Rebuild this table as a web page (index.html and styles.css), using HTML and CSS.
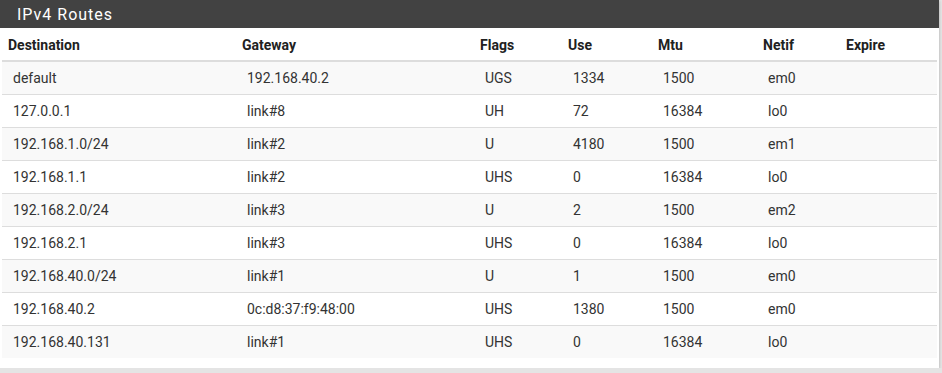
FILE: index.html
```html
<!DOCTYPE html>
<html>
<head>
<meta charset="utf-8">
<link rel="stylesheet" href="styles.css">
</head>
<body>
<div class="panel">
  <div class="panel-heading"><h2 class="panel-title">IPv4 Routes</h2></div>
  <div class="panel-body">
    <table class="routes">
      <colgroup>
        <col class="c1"><col class="c2"><col class="c3"><col class="c4"><col class="c5"><col class="c6"><col class="c7">
      </colgroup>
      <thead>
        <tr><th>Destination</th><th>Gateway</th><th>Flags</th><th>Use</th><th>Mtu</th><th>Netif</th><th>Expire</th></tr>
      </thead>
      <tbody>
        <tr><td>default</td><td>192.168.40.2</td><td>UGS</td><td>1334</td><td>1500</td><td>em0</td><td></td></tr>
        <tr><td>127.0.0.1</td><td>link#8</td><td>UH</td><td>72</td><td>16384</td><td>lo0</td><td></td></tr>
        <tr><td>192.168.1.0/24</td><td>link#2</td><td>U</td><td>4180</td><td>1500</td><td>em1</td><td></td></tr>
        <tr><td>192.168.1.1</td><td>link#2</td><td>UHS</td><td>0</td><td>16384</td><td>lo0</td><td></td></tr>
        <tr><td>192.168.2.0/24</td><td>link#3</td><td>U</td><td>2</td><td>1500</td><td>em2</td><td></td></tr>
        <tr><td>192.168.2.1</td><td>link#3</td><td>UHS</td><td>0</td><td>16384</td><td>lo0</td><td></td></tr>
        <tr><td>192.168.40.0/24</td><td>link#1</td><td>U</td><td>1</td><td>1500</td><td>em0</td><td></td></tr>
        <tr><td>192.168.40.2</td><td>0c:d8:37:f9:48:00</td><td>UHS</td><td>1380</td><td>1500</td><td>em0</td><td></td></tr>
        <tr><td>192.168.40.131</td><td>link#1</td><td>UHS</td><td>0</td><td>16384</td><td>lo0</td><td></td></tr>
      </tbody>
    </table>
  </div>
</div>
</body>
</html>
```
FILE: styles.css
```css
html, body {
  margin: 0;
  padding: 0;
  background: #e4e4e4;
  font-family: Roboto, "Liberation Sans", sans-serif;
  color: #212121;
}
.panel {
  width: 939px;
  background: #fff;
  box-shadow: 0 1px 3px rgba(0,0,0,0.25);
}
.panel-heading {
  background: #424242;
  height: 28px;
  padding: 0 17px;
  display: flex;
  align-items: center;
}
.panel-title {
  margin: 0;
  color: #fff;
  font-size: 16px;
  font-weight: 400;
  letter-spacing: 1px;
}
.panel-body {
  padding: 1px 2px 10px 2px;
}
.routes {
  width: 935px;
  border-collapse: collapse;
  table-layout: fixed;
  font-size: 14px;
}
.c1 { width: 234px; }
.c2 { width: 238px; }
.c3 { width: 88px; }
.c4 { width: 90px; }
.c5 { width: 105px; }
.c6 { width: 83px; }
.c7 { width: 97px; }
.routes th {
  text-align: left;
  font-weight: 700;
  font-size: 14px;
  padding: 0 6px;
  height: 31px;
  border-bottom: 2px solid #ddd;
}
.routes td {
  padding: 0 11px;
  height: 32px;
  border-top: 1px solid #ddd;
  color: #333;
}
.routes tbody tr:first-child td { border-top: 0; height: 32px; }
.routes tbody tr:nth-child(odd) { background: #f9f9f9; }
```
